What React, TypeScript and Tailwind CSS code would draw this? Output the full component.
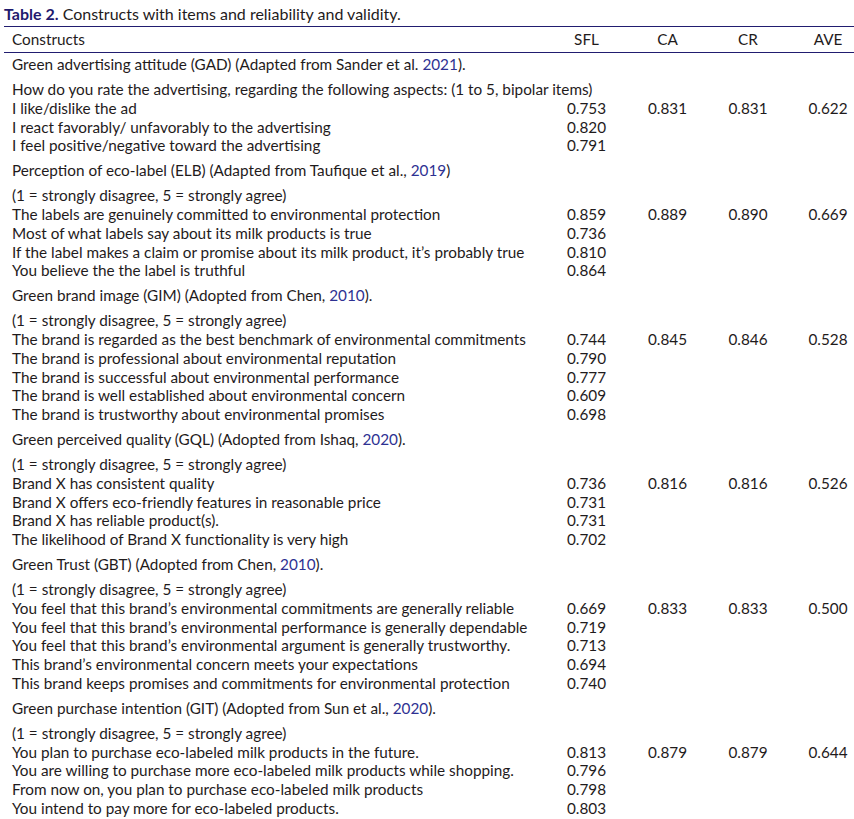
import React from 'react'

type Section = {
  name: string
  cite: string
  tail: string
  scale: string
  stats: [string, string, string]
  items: [string, string][]
}

const agree = '(1 = strongly disagree, 5 = strongly agree)'

const sections: Section[] = [
  {
    name: 'Green advertising attitude (GAD) (Adapted from Sander et al. ',
    cite: '2021',
    tail: ').',
    scale: 'How do you rate the advertising, regarding the following aspects: (1 to 5, bipolar items)',
    stats: ['0.831', '0.831', '0.622'],
    items: [
      ['I like/dislike the ad', '0.753'],
      ['I react favorably/ unfavorably to the advertising', '0.820'],
      ['I feel positive/negative toward the advertising', '0.791'],
    ],
  },
  {
    name: 'Perception of eco-label (ELB) (Adapted from Taufique et al., ',
    cite: '2019',
    tail: ')',
    scale: agree,
    stats: ['0.889', '0.890', '0.669'],
    items: [
      ['The labels are genuinely committed to environmental protection', '0.859'],
      ['Most of what labels say about its milk products is true', '0.736'],
      ['If the label makes a claim or promise about its milk product, it\u2019s probably true', '0.810'],
      ['You believe the the label is truthful', '0.864'],
    ],
  },
  {
    name: 'Green brand image (GIM) (Adopted from Chen, ',
    cite: '2010',
    tail: ').',
    scale: agree,
    stats: ['0.845', '0.846', '0.528'],
    items: [
      ['The brand is regarded as the best benchmark of environmental commitments', '0.744'],
      ['The brand is professional about environmental reputation', '0.790'],
      ['The brand is successful about environmental performance', '0.777'],
      ['The brand is well established about environmental concern', '0.609'],
      ['The brand is trustworthy about environmental promises', '0.698'],
    ],
  },
  {
    name: 'Green perceived quality (GQL) (Adopted from Ishaq, ',
    cite: '2020',
    tail: ').',
    scale: agree,
    stats: ['0.816', '0.816', '0.526'],
    items: [
      ['Brand X has consistent quality', '0.736'],
      ['Brand X offers eco-friendly features in reasonable price', '0.731'],
      ['Brand X has reliable product(s).', '0.731'],
      ['The likelihood of Brand X functionality is very high', '0.702'],
    ],
  },
  {
    name: 'Green Trust (GBT) (Adopted from Chen, ',
    cite: '2010',
    tail: ').',
    scale: agree,
    stats: ['0.833', '0.833', '0.500'],
    items: [
      ['You feel that this brand\u2019s environmental commitments are generally reliable', '0.669'],
      ['You feel that this brand\u2019s environmental performance is generally dependable', '0.719'],
      ['You feel that this brand\u2019s environmental argument is generally trustworthy.', '0.713'],
      ['This brand\u2019s environmental concern meets your expectations', '0.694'],
      ['This brand keeps promises and commitments for environmental protection', '0.740'],
    ],
  },
  {
    name: 'Green purchase intention (GIT) (Adopted from Sun et al., ',
    cite: '2020',
    tail: ').',
    scale: agree,
    stats: ['0.879', '0.879', '0.644'],
    items: [
      ['You plan to purchase eco-labeled milk products in the future.', '0.813'],
      ['You are willing to purchase more eco-labeled milk products while shopping.', '0.796'],
      ['From now on, you plan to purchase eco-labeled milk products', '0.798'],
      ['You intend to pay more for eco-labeled products.', '0.803'],
    ],
  },
]

const cols = 'grid grid-cols-[1fr_81px_81px_80px_66px]'

const App = () => {
  return (
    <main className="min-h-screen w-[854px] bg-white pl-[4px] font-['Lato',sans-serif] text-[15.3px] leading-[18.75px] text-[#1f1b1c]">
      <h1 className="pt-[4px] pb-[3px] text-[16px] leading-[19px]">
        <span className="font-bold text-[#1f1a6e]">Table 2.</span> Constructs with items and reliability and validity.
      </h1>

      <div className="border-t border-[#211d70]">
        <div className={`${cols} h-[26px] items-center border-b border-[#211d70]`}>
          <div className="pl-[8px]">Constructs</div>
          <div className="text-center">SFL</div>
          <div className="text-center">CA</div>
          <div className="text-center">CR</div>
          <div className="pl-[14px] text-center">AVE</div>
        </div>

        {sections.map((s, si) => (
          <div key={s.name}>
            <div
              className={`whitespace-nowrap pl-[8px] ${si === 0 ? 'pt-[2px]' : 'pt-[6.25px]'} pb-[6.25px]`}
            >
              {s.name}
              <span className="text-[#2e3192]">{s.cite}</span>
              {s.tail}
            </div>
            <div className="whitespace-nowrap pl-[8px]">{s.scale}</div>
            {s.items.map(([text, sfl], i) => (
              <div key={text} className={cols}>
                <div className="whitespace-nowrap pl-[8px]">{text}</div>
                <div className="text-center">{sfl}</div>
                <div className="text-center">{i === 0 ? s.stats[0] : ''}</div>
                <div className="text-center">{i === 0 ? s.stats[1] : ''}</div>
                <div className="pl-[14px] text-center">{i === 0 ? s.stats[2] : ''}</div>
              </div>
            ))}
          </div>
        ))}
      </div>
    </main>
  )
}

export default App
